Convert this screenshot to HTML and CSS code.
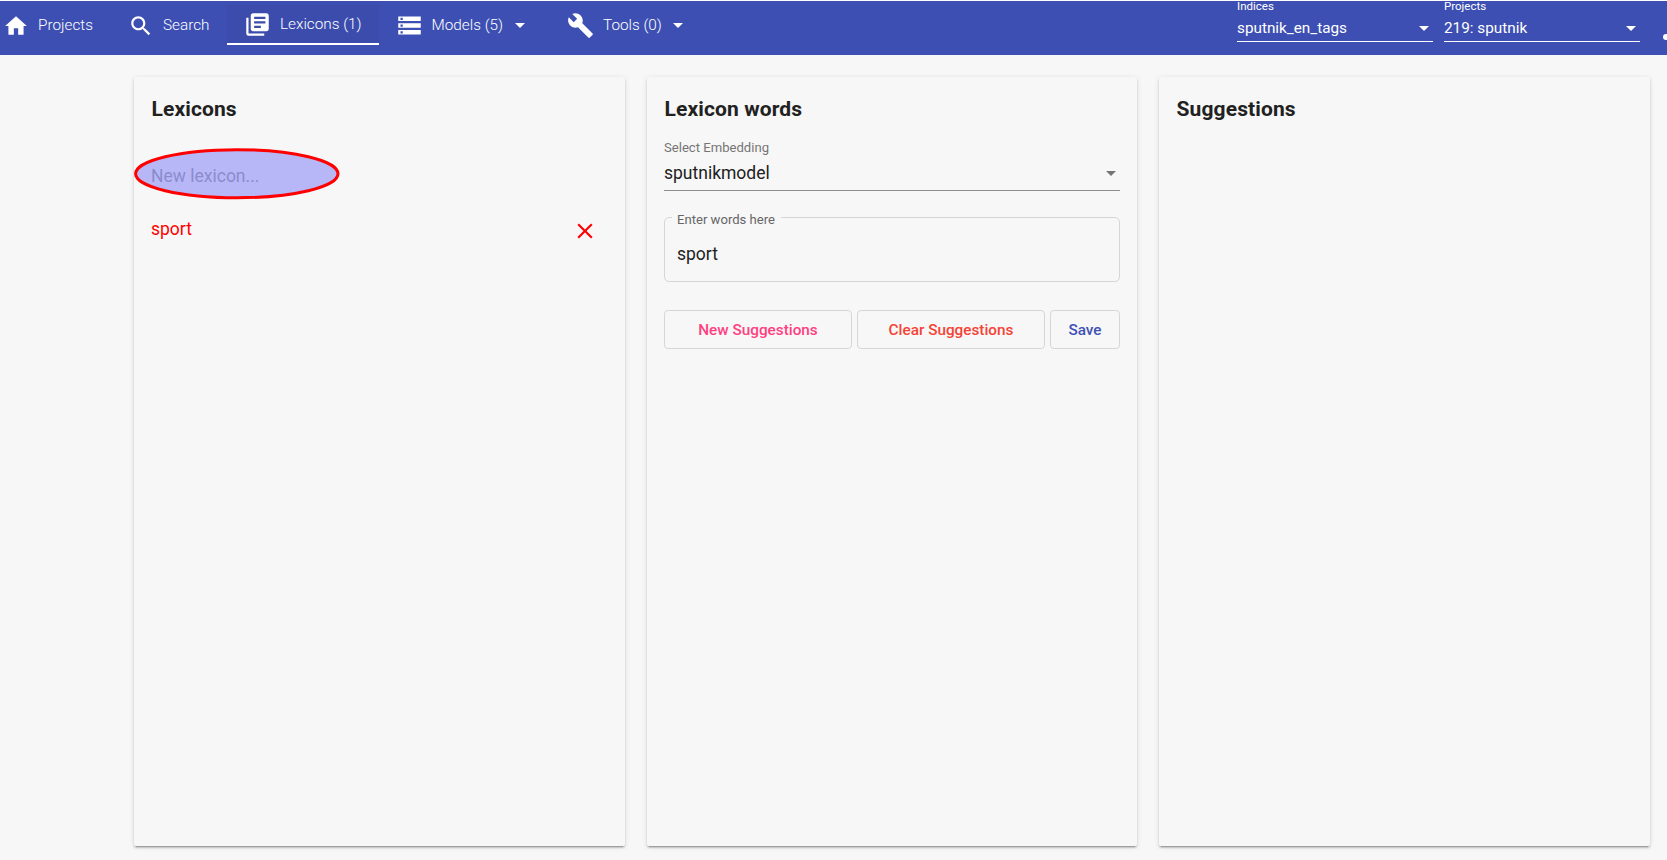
FILE: index.html
```html
<!DOCTYPE html>
<html lang="en">
<head>
<meta charset="utf-8">
<title>Lexicons</title>
<link rel="stylesheet" href="styles.css">
</head>
<body>
<header class="toolbar">
  <nav class="nav">
    <a class="nav-item home"><svg class="icon small" viewBox="0 0 24 24"><path d="M10 20v-6h4v6h5v-8h3L12 3 2 12h3v8z"/></svg><span>Projects</span></a>
    <a class="nav-item search"><svg class="icon small" viewBox="0 0 24 24"><path d="M15.5 14h-.79l-.28-.27C15.41 12.59 16 11.11 16 9.5 16 5.91 13.09 3 9.5 3S3 5.91 3 9.5 5.91 16 9.5 16c1.61 0 3.09-.59 4.23-1.57l.27.28v.79l5 4.99L20.49 19l-4.99-5zm-6 0C7.01 14 5 11.99 5 9.5S7.01 5 9.5 5 14 7.01 14 9.5 11.99 14 9.5 14z"/></svg><span>Search</span></a>
    <a class="nav-item active"><svg class="icon" viewBox="0 0 24 24"><path d="M4 6H2v14c0 1.1.9 2 2 2h14v-2H4V6zm16-4H8c-1.1 0-2 .9-2 2v12c0 1.1.9 2 2 2h12c1.1 0 2-.9 2-2V4c0-1.1-.9-2-2-2zm-1 9H9V9h10v2zm-4 4H9v-2h6v2zm4-8H9V5h10v2z"/></svg><span>Lexicons (1)</span></a>
    <a class="nav-item models"><svg class="icon" viewBox="0 0 24 24"><path d="M2 20h20v-4H2v4zm2-3h2v2H4v-2zM2 4v4h20V4H2zm4 3H4V5h2v2zm-4 7h20v-4H2v4zm2-3h2v2H4v-2z"/></svg><span>Models (5)</span><i class="caret"></i></a>
    <a class="nav-item tools"><svg class="icon" viewBox="0 0 24 24"><path d="M22.7 19l-9.1-9.1c.9-2.3.4-5-1.5-6.9-2-2-5-2.4-7.4-1.3L9 6 6 9 1.6 4.7C.4 7.1.9 10.1 2.9 12.1c1.9 1.9 4.6 2.4 6.9 1.5l9.1 9.1c.4.4 1 .4 1.4 0l2.3-2.3c.5-.4.5-1.1.1-1.4z"/></svg><span>Tools (0)</span><i class="caret"></i></a>
  </nav>
  <div class="pickers">
    <div class="picker"><div class="picker-label">Indices</div><div class="picker-value"><span>sputnik_en_tags</span><i class="caret"></i></div></div>
    <div class="picker"><div class="picker-label">Projects</div><div class="picker-value"><span>219: sputnik</span><i class="caret"></i></div></div>
  </div>
  <i class="user"></i>
</header>
<main class="columns">
  <section class="card">
    <h2>Lexicons</h2>
    <div class="new-lexicon"><span>New lexicon...</span><svg class="highlight" viewBox="0 0 206 52"><ellipse cx="102.8" cy="25.7" rx="101.2" ry="24"/></svg></div>
    <div class="lexicon-row"><span>sport</span><svg class="remove" viewBox="0 0 24 24"><path d="M19 6.41L17.59 5 12 10.59 6.41 5 5 6.41 10.59 12 5 17.59 6.41 19 12 13.41 17.59 19 19 17.59 13.41 12z"/></svg></div>
  </section>
  <section class="card">
    <h2>Lexicon words</h2>
    <div class="embedding-label">Select Embedding</div>
    <div class="embedding"><span>sputnikmodel</span><i class="caret"></i></div>
    <fieldset class="words"><legend><span>Enter words here</span></legend><div>sport</div></fieldset>
    <div class="actions">
      <button class="btn suggest">New Suggestions</button>
      <button class="btn clear">Clear Suggestions</button>
      <button class="btn save">Save</button>
    </div>
  </section>
  <section class="card">
    <h2>Suggestions</h2>
  </section>
</main>
</body>
</html>
```
FILE: styles.css
```css
* { box-sizing: border-box; }
html, body { height: 100%; }
body {
  margin: 0;
  padding-top: 1px;
  overflow: hidden;
  background: #f7f7f7;
  box-shadow: inset 0 1px #fff;
  color: #212121;
  font-family: Roboto, "Liberation Sans", sans-serif;
}
.toolbar {
  display: flex;
  height: 54px;
  background: #3d4fb2;
  color: #fff;
}
.nav { display: flex; align-items: flex-start; flex: none; width: 1237px; }
.nav-item {
  display: flex;
  align-items: center;
  flex: none;
  height: 41px;
  margin-top: 4px;
  font-size: 15.3px;
  font-weight: 300;
  line-height: 20px;
  white-space: nowrap;
}
.nav-item span { padding-bottom: 1px; }
.nav-item.active span { padding-bottom: 0; }
.icon { flex: none; width: 27px; height: 27px; fill: #fff; }
.icon.small { width: 26px; height: 26px; }
.home { width: 128px; padding-left: 3px; }
.home span { margin-left: 9px; }
.search { width: 99px; }
.search span { margin-left: 9px; }
.active {
  height: 40px;
  width: 152px;
  padding-left: 17px;
  border-bottom: 2px solid #fff;
  background: #3b4cad;
}
.active span { margin-left: 9px; }
.models { width: 188px; padding-left: 17px; }
.models span { margin-left: 8.5px; }
.tools { width: 130px; }
.tools span { margin-left: 9px; }
.caret {
  flex: none;
  width: 0;
  border: 5px solid transparent;
  border-top-color: currentColor;
  border-bottom: 0;
}
.nav .caret { margin-left: 11.5px; }
.pickers { display: flex; gap: 11px; flex: none; }
.picker { width: 196px; height: 41px; border-bottom: 1px solid #fff; }
.picker-label { height: 14px; font-size: 11.5px; line-height: 11px; }
.picker-value {
  display: flex;
  align-items: center;
  justify-content: space-between;
  height: 26px;
  padding-right: 4px;
  font-size: 15.3px;
}
.user { flex: none; width: 4px; height: 6px; margin: 33px 0 0 23px; border-radius: 3px 0 0 3px; background: #fff; }
.columns {
  display: grid;
  grid-template-columns: 491px 490px 491px;
  gap: 22px;
  height: 791px;
  padding: 22px 0 0 134px;
}
.card {
  padding: 19px 17px 0;
  border-radius: 2px;
  box-shadow: 0 3px 1px -2px #0003, 0 2px 2px #00000024, 0 1px 5px #0000001f;
}
h2 {
  margin: 0;
  padding-left: 0.5px;
  font-size: 21px;
  font-weight: 700;
  letter-spacing: 0.12px;
  line-height: 26px;
}
.new-lexicon {
  position: relative;
  margin-top: 42px;
  color: #9e9e9e;
  font-size: 17.5px;
  line-height: 24px;
}
.highlight {
  position: absolute;
  top: -16px;
  left: -17px;
  width: 206px;
  height: 52px;
  fill: #7878f880;
  stroke: #f00;
  stroke-width: 3;
}
.lexicon-row {
  display: flex;
  align-items: center;
  justify-content: space-between;
  height: 28px;
  margin-top: 27px;
  padding-right: 10px;
  color: #f00;
  font-size: 17.5px;
}
.remove { width: 26px; height: 26px; margin-top: 3px; fill: #f00; }
.embedding-label { margin-top: 17px; color: #757575; font-size: 13.1px; line-height: 18px; }
.embedding {
  display: flex;
  align-items: center;
  justify-content: space-between;
  height: 34px;
  padding-right: 4px;
  border-bottom: 1px solid #8d8d8d;
  font-size: 17.5px;
}
.embedding span { margin-top: -1px; }
.embedding .caret { color: #757575; }
.words {
  height: 73px;
  margin: 18px 0 0;
  padding: 0 12px;
  border: 1px solid #d6d6d6;
  border-radius: 5px;
  font-size: 17.5px;
}
.words legend {
  height: 16px;
  margin-left: -5px;
  padding: 0 6px 0 5px;
  color: #666;
  font-size: 13.1px;
  line-height: 21px;
}
.words div { padding-top: 17px; line-height: 24px; }
.actions { display: grid; grid-template-columns: 188px 188px 70px; gap: 5px; margin-top: 28px; }
.btn {
  height: 39px;
  padding: 0;
  border: 1px solid #d6d6d6;
  border-radius: 4px;
  background: transparent;
  font: 500 15.3px Roboto, sans-serif;
}
.suggest { color: #ff4081; }
.clear { color: #f44336; }
.save { color: #3f51b5; }
```
